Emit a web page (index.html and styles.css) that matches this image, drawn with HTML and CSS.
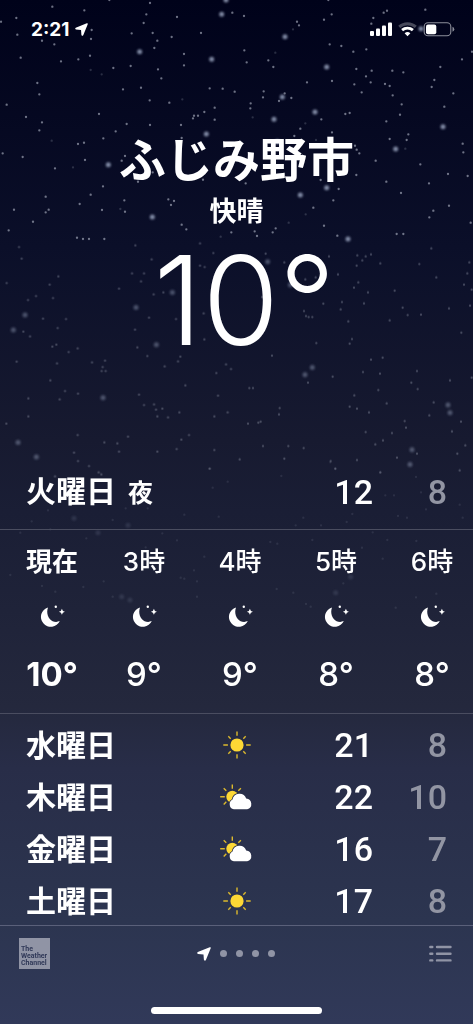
FILE: index.html
```html
<!DOCTYPE html>
<html lang="ja">
<head>
<meta charset="utf-8">
<meta name="viewport" content="width=device-width, initial-scale=1">
<title>天気 - ふじみ野市</title>
<link rel="stylesheet" href="styles.css">
</head>
<body>
<svg class="symbols" aria-hidden="true">
  <symbol id="arrow" viewBox="0 0 14 14"><path d="M12.700 .3Q14.200 -.1 13.700 1.300L9 12.800Q8 14.600 6.900 12.800L6.500 7.500L1 7Q-.5 6.100 .8 5.100Z" fill="currentColor"/></symbol>
  <symbol id="moon" viewBox="0 0 26 24"><path d="M9 2.400A9.900 9.900 0 1 0 20.800 16.100C13 19.600 5.800 11.200 9 2.400Z" fill="#fff"/><circle cx="16.800" cy="1.700" r="1.200" fill="#fff"/><path d="M22.900 3.700Q23.300 6.300 25.900 6.700Q23.300 7.100 22.900 9.700Q22.500 7.100 19.900 6.700Q22.500 6.300 22.900 3.700Z" fill="#fff"/></symbol>
  <symbol id="sun" viewBox="0 0 28 28"><circle cx="14" cy="14" r="6.600" fill="#fdd835"/><path d="M14 .5v4.200M14 23.300v4.200M.3 14h4.600M23.100 14h4.600M5.300 5.300l2.400 2.400M20.300 20.300l2.400 2.400M22.700 5.300l-2.400 2.400M7.700 20.300l-2.400 2.400" stroke="#dcb92d" stroke-width="1.400"/></symbol>
  <symbol id="partly" viewBox="0 0 34 26"><path d="M12.300 .6v4.200M.2 12.800h4.600M3.700 4.200l2.600 2.600M20.900 4.200l-2.600 2.600M6.300 17.800l-2.600 2.600" stroke="#dcb92d" stroke-width="1.400"/><circle cx="12.300" cy="12.800" r="6" fill="#fdd835"/><path d="M13.800 25.300a5.200 5.200 0 0 1-1.300-9.700a7.100 7.100 0 0 1 13.700-1.100a5.500 5.500 0 0 1 1 10.800Z" fill="#fff" stroke="#292f4a" stroke-width="1.600" paint-order="stroke"/></symbol>
</svg>
<main class="weather">
  <svg class="stars" viewBox="0 0 1419 3072" preserveAspectRatio="xMidYMin slice" aria-hidden="true">
    <g class="top">
      <path class="s" d="M157 20h0M253 31h0M328 0h0M450 9h0M49 54h0M3 65h0M52 104h0M126 122h0M163 133h0M275 90h0M273 117h0M439 43h0M431 69h0M395 100h0M458 99h0M472 122h0M463 144h0M515 111h0M531 51h0M603 99h0M697 38h0M62 173h0M183 184h0M235 178h0M270 167h0M340 204h0M392 198h0M474 208h0M484 235h0M552 196h0M552 162h0M112 249h0M118 283h0M20 314h0M78 351h0M126 367h0M118 391h0M297 342h0M369 268h0M423 263h0M449 301h0M508 308h0M629 265h0M668 266h0M704 275h0M613 336h0M644 323h0M644 359h0M594 347h0M582 347h0M579 355h0M543 375h0M450 375h0M380 372h0M347 394h0M310 415h0M252 428h0M234 432h0M8 460h0M68 471h0M165 505h0M255 480h0M375 468h0M365 482h0M309 559h0M272 584h0M239 612h0M137 590h0M137 637h0M146 629h0M42 629h0M99 665h0M26 691h0M231 713h0M249 717h0M267 717h0M313 717h0M306 630h0M373 601h0M375 635h0M414 545h0M505 598h0M522 603h0M513 615h0M545 674h0M559 688h0M694 697h0M609 539h0M545 414h0M458 517h0"/>
      <path class="d" d="M272 210h0M305 223h0M547 298h0M155 422h0M219 502h0M361 627h0M662 710h0"/>
      <path class="b" d="M678 0h0M665 43h0M419 155h0M635 178h0M619 402h0M325 494h0M457 651h0"/>
      <g transform="translate(711)">
        <path class="s" d="M21 48h0M180 65h0M186 76h0M261 59h0M284 43h0M274 0h0M450 32h0M440 38h0M409 54h0M403 71h0M565 29h0M22 151h0M29 187h0M94 181h0M109 201h0M278 133h0M313 138h0M349 155h0M388 148h0M358 207h0M404 212h0M387 229h0M401 247h0M352 253h0M374 277h0M466 212h0M499 217h0M444 252h0M458 258h0M467 286h0M592 240h0M584 261h0M610 201h0M675 178h0M649 280h0M622 320h0M494 313h0M489 344h0M448 364h0M210 247h0M285 243h0M80 274h0M78 292h0M143 280h0M163 294h0M126 303h0M41 310h0M40 325h0M253 358h0M325 342h0M338 339h0M190 386h0M172 408h0M285 397h0M354 437h0M359 449h0M367 460h0M416 482h0M458 417h0M509 420h0M514 403h0M550 493h0M633 522h0M692 528h0M576 550h0M677 431h0M679 457h0M358 525h0M448 545h0M492 579h0M589 632h0M577 652h0M636 617h0M289 601h0M229 623h0M305 567h0M251 540h0M261 677h0M301 707h0M116 685h0M107 697h0M53 694h0M60 708h0M479 702h0M499 702h0M701 668h0M705 155h0M26 550h0"/>
        <path class="d" d="M168 88h0M115 158h0M47 352h0M205 370h0M505 446h0M237 420h0M206 643h0M155 668h0"/>
        <path class="b" d="M144 110h0M269 201h0M136 291h0M234 336h0M111 358h0M618 380h0M476 447h0M269 563h0M190 585h0M552 86h0M333 717h0M121 425h0"/>
      </g>
    </g>
    <g class="middle" transform="translate(0 720)">
      <path class="s" d="M57 21h0M65 56h0M406 16h0M600 10h0M640 39h0M600 77h0M614 81h0M455 58h0M396 100h0M432 100h0M423 124h0M357 146h0M175 109h0M149 134h0M20 129h0M108 168h0M84 180h0M159 174h0M129 236h0M198 237h0M173 264h0M90 289h0M70 275h0M169 314h0M157 320h0M206 336h0M233 325h0M50 365h0M171 370h0M276 367h0M315 362h0M308 381h0M305 393h0M317 393h0M412 322h0M442 348h0M405 269h0M447 233h0M490 157h0M461 163h0M528 237h0M611 220h0M541 350h0M534 364h0M494 379h0M678 373h0M693 387h0M649 399h0M195 453h0M179 478h0M234 461h0M85 475h0M85 529h0M19 551h0M417 464h0M432 495h0M462 493h0M468 509h0M487 506h0M472 529h0M504 532h0M538 517h0M643 529h0M683 517h0M654 467h0M556 436h0M384 590h0M352 610h0M313 607h0M357 635h0M233 585h0M222 638h0M234 663h0M267 678h0M296 697h0M304 703h0M472 635h0M530 627h0M544 599h0M567 585h0M643 630h0M629 686h0M165 709h0M151 421h0M613 298h0"/>
      <path class="b" d="M75 225h0M40 270h0M408 202h0M517 157h0M469 314h0M309 473h0M54 607h0M109 651h0"/>
      <g transform="translate(711)">
        <path class="s" d="M583 25h0M361 46h0M386 49h0M402 43h0M376 61h0M359 77h0M430 70h0M276 49h0M86 41h0M142 67h0M547 72h0M598 112h0M697 67h0M691 100h0M681 134h0M303 103h0M364 127h0M351 143h0M393 157h0M473 152h0M497 203h0M512 225h0M552 224h0M458 241h0M381 190h0M315 186h0M311 208h0M259 191h0M201 213h0M207 228h0M215 231h0M226 231h0M334 244h0M238 309h0M345 297h0M338 311h0M636 205h0M673 278h0M699 197h0M402 359h0M437 353h0M378 396h0M429 401h0M540 393h0M523 428h0M542 447h0M424 450h0M352 466h0M449 490h0M338 500h0M360 506h0M396 517h0M590 487h0M577 526h0M639 421h0M287 410h0M213 428h0M105 347h0M37 444h0M48 444h0M128 504h0M126 523h0M64 548h0M71 545h0M33 551h0M78 618h0M154 618h0M200 624h0M142 656h0M8 658h0M281 663h0M295 686h0M360 660h0M386 576h0M465 579h0M438 601h0M415 613h0M503 543h0M507 563h0M645 574h0M672 545h0M540 641h0M480 653h0M661 641h0M685 616h0M668 691h0M430 697h0M75 171h0M81 120h0M205 118h0M236 112h0M704 149h0M704 413h0"/>
        <path class="b" d="M92 65h0M160 135h0M226 382h0M204 404h0M633 495h0M639 518h0M525 629h0M519 673h0"/>
      </g>
    </g>
    <g class="low" transform="translate(0 1380)">
      <path class="s" d="M629 26h0M683 65h0M638 83h0M553 164h0M656 170h0M443 145h0M377 145h0M338 180h0M487 220h0M531 241h0M259 235h0M151 208h0M95 184h0M144 151h0M61 218h0M31 345h0M126 378h0M250 381h0M311 364h0M166 395h0M542 353h0M553 356h0M582 331h0M591 364h0M591 410h0M613 290h0M437 262h0M338 410h0M991 7h0M1006 26h0M844 48h0M1141 37h0M1156 106h0M1182 106h0M1248 51h0M1263 97h0M1278 148h0M1194 168h0M1221 173h0M1057 162h0M1040 186h0M910 173h0M887 196h0M963 196h0M1118 217h0M1162 240h0M1249 243h0M1086 263h0M937 240h0M832 251h0M811 246h0M1148 296h0M1030 370h0M830 387h0M880 398h0M918 432h0M932 440h0M1248 412h0M1309 401h0M1187 443h0M1388 173h0M1379 134h0"/>
      <path class="b" d="M222 175h0M384 196h0M294 218h0M365 410h0M390 420h0M1052 351h0M1007 398h0"/>
    </g>
  </svg>

  <header class="status">
    <div class="clock"><time>2:21</time><svg class="clock-arrow"><use href="#arrow"/></svg></div>
    <svg class="indicators" viewBox="0 0 86 18" role="img" aria-label="電波、Wi-Fi、バッテリー">
      <g fill="#fff"><rect x="1" y="11" width="4" height="5" rx="1"/><rect x="7" y="8.500" width="4" height="7.500" rx="1"/><rect x="13" y="5.500" width="4" height="10.500" rx="1"/><rect x="19" y="2.500" width="4" height="13.500" rx="1"/></g>
      <path d="M30.200 6.800a12.500 12.500 0 0 1 16.600 0" stroke="#fff" stroke-opacity=".28" stroke-width="3" fill="none"/>
      <path d="M33.100 10.200a8.200 8.200 0 0 1 10.800 0" stroke="#fff" stroke-width="2.900" fill="none"/><path d="M35.600 13.200a4.500 4.500 0 0 1 5.800 0l-2.900 3.100Z" fill="#fff"/>
      <rect x="55.200" y="2.800" width="26.600" height="13" rx="3.800" fill="none" stroke="#8d8f9b" stroke-width="1.100"/><rect x="57" y="4.500" width="10.300" height="9.700" rx="2" fill="#fff"/><path d="M83.500 6.800q1.800.7 1.800 2.500t-1.800 2.500Z" fill="#8d8f9b"/>
    </svg>
  </header>

  <section class="current">
    <h1 class="city">ふじみ野市</h1>
    <p class="condition">快晴</p>
    <p class="temperature">10°</p>
  </section>

  <section class="today">
    <h2 class="day">火曜日<span class="period">夜</span></h2>
    <div class="range"><span>12</span><span class="low-temp">8</span></div>
  </section>

  <ol class="hours">
    <li class="hour now"><span class="label">現在</span><svg class="moon"><use href="#moon"/></svg><span class="degrees">10°</span></li>
    <li class="hour"><span class="label">3時</span><svg class="moon"><use href="#moon"/></svg><span class="degrees">9°</span></li>
    <li class="hour"><span class="label">4時</span><svg class="moon"><use href="#moon"/></svg><span class="degrees">9°</span></li>
    <li class="hour"><span class="label">5時</span><svg class="moon"><use href="#moon"/></svg><span class="degrees">8°</span></li>
    <li class="hour"><span class="label">6時</span><svg class="moon"><use href="#moon"/></svg><span class="degrees">8°</span></li>
  </ol>

  <ol class="week">
    <li class="row"><span class="day">水曜日</span><svg class="sun"><use href="#sun"/></svg><div class="range"><span>21</span><span class="low-temp">8</span></div></li>
    <li class="row"><span class="day">木曜日</span><svg class="partly"><use href="#partly"/></svg><div class="range"><span>22</span><span class="low-temp">10</span></div></li>
    <li class="row"><span class="day">金曜日</span><svg class="partly"><use href="#partly"/></svg><div class="range"><span>16</span><span class="low-temp">7</span></div></li>
    <li class="row"><span class="day">土曜日</span><svg class="sun"><use href="#sun"/></svg><div class="range"><span>17</span><span class="low-temp">8</span></div></li>
  </ol>

  <footer class="toolbar">
    <a class="channel" href="#channel">The<br>Weather<br>Channel</a>
    <nav class="pages" aria-label="地点">
      <button class="page" aria-label="現在地"><svg class="page-arrow"><use href="#arrow"/></svg></button>
      <button class="page dot" aria-label="地点 2"></button>
      <button class="page dot" aria-label="地点 3"></button>
      <button class="page dot" aria-label="地点 4"></button>
      <button class="page dot" aria-label="地点 5"></button>
    </nav>
    <button class="list" aria-label="地点リスト"><svg class="list-icon" viewBox="0 0 24 18"><path d="M2.300 2h2M2.300 8.700h2M2.300 15.400h2M9 2H22.500M9 8.700H22.500M9 15.400H22.500" stroke="currentColor" stroke-width="2.400" stroke-linecap="round"/></svg></button>
  </footer>
  <div class="home"></div>
</main>
</body>
</html>
```

FILE: styles.css
```css
* { box-sizing: border-box; }
body {
  margin: 0;
  color: #fff;
  font-family: Inter, "Noto Sans CJK JP", sans-serif;
  font-weight: 500;
}
h1, h2, p, ol { margin: 0; padding: 0; font-weight: 500; }
ol { list-style: none; }
button { padding: 0; border: 0; background: none; color: inherit; }
svg { display: block; }
.symbols { position: absolute; width: 0; height: 0; }

.weather {
  position: relative;
  isolation: isolate;
  display: flex;
  flex-direction: column;
  min-height: 100vh;
  overflow: hidden;
  background: linear-gradient(#00021a 0%, #0b0f29 24%, #171a30 43%, #1a1e35 50%, #24283d 69%, #282d48 75%, #2c3550 90%, #313959 100%);
}
.stars { position: absolute; z-index: -1; inset: 0; width: 100%; height: 100%; fill: none; stroke: #c5cbd8; stroke-linecap: round; }
.s { stroke-width: 7; stroke-opacity: .55; }
.d { stroke-width: 7; stroke-opacity: .2; }
.b { stroke: #a9b6d0; stroke-width: 15; stroke-opacity: .75; filter: blur(3px); }
.middle { opacity: .55; }
.low { opacity: .2; }

.status { display: flex; justify-content: space-between; align-items: center; height: 58px; padding: 0 18px 0 31px; }
.clock { display: flex; align-items: center; gap: 6px; font-size: 19px; font-weight: 700; }
.clock-arrow { width: 13px; height: 13px; }
.indicators { width: 86px; height: 18px; }

.current { padding-top: 72px; text-align: center; }
.city { font-size: 47px; font-weight: 600; line-height: 60px; }
.condition { padding-top: 6px; font-size: 27px; font-weight: 600; line-height: 32px; }
.temperature { padding: 12px 0 0 16px; font-size: 124px; font-weight: 300; line-height: 120px; }

.today, .row {
  display: grid;
  grid-template-columns: 1fr 36px 1fr;
  align-items: center;
  padding: 0 26px;
  line-height: 44px;
}
.today { margin-top: 109px; padding-bottom: 14px; border-bottom: 1px solid #4a4d60; }
.today .day { grid-column: 1 / 3; }
.day { font-size: 30px; font-weight: 600; line-height: 44px; }
.period { padding-left: 12px; font-size: 25px; }
.range { display: flex; justify-content: flex-end; font-family: Roboto, Inter, sans-serif; font-size: 34px; }
.low-temp { flex: 0 0 74px; color: #9295a3; text-align: right; }

.hours { display: flex; height: 184px; padding: 15px 0 0 26px; overflow: hidden; border-bottom: 1px solid #4a4d60; }
.hour { display: flex; flex: 0 0 96px; flex-direction: column; align-items: center; }
.now { flex-basis: 52px; margin-right: 18px; font-weight: 700; }
.label { font-size: 26px; line-height: 34px; white-space: nowrap; }
.moon { width: 26px; height: 24px; margin: 26px 0 23px; }
.degrees { font-size: 33px; line-height: 44px; }

.week { display: grid; gap: 8px; padding: 9px 0 2px; border-bottom: 1px solid #5a607a; }
.row svg { justify-self: center; }
.sun { width: 28px; height: 28px; }
.partly { width: 34px; height: 26px; }

.toolbar { display: grid; grid-template-columns: 1fr auto 1fr; align-items: center; padding: 12px 21px 0 19px; }
.channel {
  width: 31px;
  height: 31px;
  padding: 8px 0 0 2px;
  background: #9094a5;
  color: #303958;
  font: 700 7px/7px Roboto, sans-serif;
  text-decoration: none;
}
.pages { display: flex; align-items: center; gap: 9px; }
.page-arrow { width: 14px; height: 14px; }
.dot { width: 7px; height: 7px; border-radius: 50%; background: #9094a5; }
.list { justify-self: end; color: #9094a5; }
.list-icon { width: 24px; height: 18px; }
.home { width: 36%; height: 7px; margin: auto auto 10px; border-radius: 4px; background: #fff; }
```
